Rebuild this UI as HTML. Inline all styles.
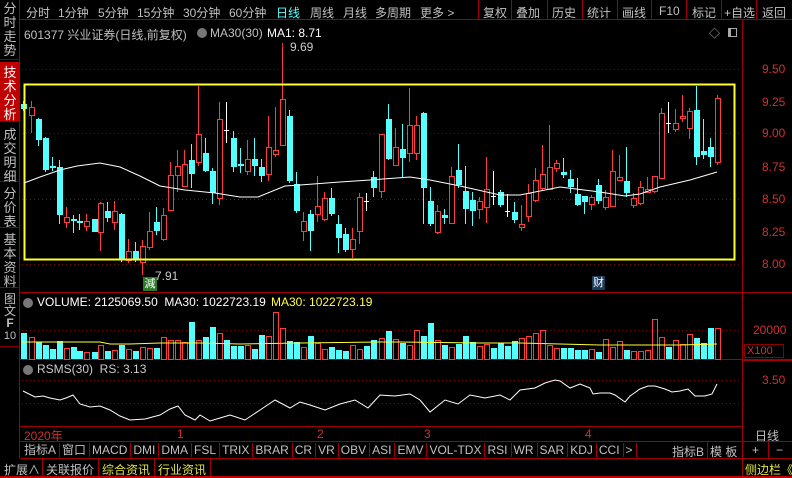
<!DOCTYPE html>
<html><head><meta charset="utf-8"><style>
*{margin:0;padding:0;box-sizing:border-box}
body{width:792px;height:478px;background:#000;overflow:hidden;position:relative;font-family:"Liberation Sans","Noto Sans CJK SC",sans-serif;font-size:12px;color:#c0c0c0}
.a{position:absolute;white-space:nowrap}
.side{position:absolute;left:0;width:20px;font-size:13px;line-height:14px;text-align:center;color:#c0c0c0;border-bottom:1px solid #800}
.sep{position:absolute;width:1px;background:#a00000}
</style></head><body>
<!-- top menu -->
<div class="a" style="left:20px;top:0;width:772px;height:20px;border-bottom:1px solid #a00000"></div>
<div class="a" style="top:4px;left:26px;font-size:12px;color:#c8c8c8">分时</div>
<div class="a" style="top:4px;left:58px">1分钟</div>
<div class="a" style="top:4px;left:98px">5分钟</div>
<div class="a" style="top:4px;left:137px">15分钟</div>
<div class="a" style="top:4px;left:183px">30分钟</div>
<div class="a" style="top:4px;left:229px">60分钟</div>
<div class="a" style="top:4px;left:276px;color:#54ffff">日线</div>
<div class="a" style="top:4px;left:310px">周线</div>
<div class="a" style="top:4px;left:343px">月线</div>
<div class="a" style="top:4px;left:375px">多周期</div>
<div class="a" style="top:4px;left:420px">更多 &gt;</div>
<div class="sep" style="left:478px;top:0;height:20px"></div>
<div class="a" style="top:4px;left:483px">复权</div>
<div class="sep" style="left:511px;top:0;height:20px"></div>
<div class="a" style="top:4px;left:516px">叠加</div>
<div class="sep" style="left:547px;top:0;height:20px"></div>
<div class="a" style="top:4px;left:552px">历史</div>
<div class="sep" style="left:582px;top:0;height:20px"></div>
<div class="a" style="top:4px;left:587px">统计</div>
<div class="sep" style="left:617px;top:0;height:20px"></div>
<div class="a" style="top:4px;left:622px">画线</div>
<div class="sep" style="left:651px;top:0;height:20px"></div>
<div class="a" style="top:4px;left:659px">F10</div>
<div class="sep" style="left:686px;top:0;height:20px"></div>
<div class="a" style="top:4px;left:692px">标记</div>
<div class="sep" style="left:721px;top:0;height:20px"></div>
<div class="a" style="top:4px;left:724px">+自选</div>
<div class="sep" style="left:756px;top:0;height:20px"></div>
<div class="a" style="top:4px;left:762px">返回</div>

<!-- sidebar -->
<div class="a" style="left:0;top:0;width:20px;height:458px;border-right:1px solid #a00000"></div>
<div class="side" style="top:2px;height:58px">分<br>时<br>走<br>势</div>
<div class="side" style="top:62px;height:60px;background:#c00000;color:#fff;padding-top:4px">技<br>术<br>分<br>析</div>
<div class="side" style="top:124px;height:58px;padding-top:4px">成<br>交<br>明<br>细</div>
<div class="side" style="top:184px;height:44px;padding-top:3px">分<br>价<br>表</div>
<div class="side" style="top:230px;height:58px;padding-top:3px">基<br>本<br>资<br>料</div>
<div class="side" style="top:292px;height:55px;padding-top:1px;font-size:12px;line-height:12px">图<br>文<br><b>F</b><br><span style="font-size:11px">10</span></div>

<!-- info line -->
<div class="a" style="top:26px;left:24px">601377 兴业证券(日线,前复权)</div>
<div class="a" style="top:28px;left:197px;width:10px;height:10px;border-radius:5px;background:#777"></div>
<div class="a" style="top:26px;left:210px">MA30(30)</div>
<div class="a" style="top:26px;left:267px;color:#fff">MA1: 8.71</div>
<div class="a" style="top:40px;left:290px;color:#ccc">9.69</div>
<div class="a" style="top:269px;left:155px;color:#ccc">7.91</div>
<div class="a" style="top:277px;left:143px;width:14px;height:14px;background:#2a7a2a;color:#fff;font-size:11px;line-height:14px;text-align:center">減</div>
<div class="a" style="top:276px;left:592px;width:13px;height:14px;background:#1c3a5a;color:#fff;font-size:11px;line-height:14px;text-align:center">财</div>
<div class="a" style="top:25px;left:709px;color:#aaa;font-size:11px">◇</div>
<div class="a" style="top:28px;left:728px;width:9px;height:9px;border:1px solid #aaa;border-left-width:3px"></div>

<!-- volume info -->
<div class="a" style="top:298px;left:23px;width:10px;height:10px;border-radius:5px;background:#777"></div>
<div class="a" style="top:295px;left:37px;color:#fff">VOLUME: 2125069.50 &nbsp;MA30: 1022723.19</div>
<div class="a" style="top:295px;left:271px;color:#ffff40">MA30: 1022723.19</div>
<div class="a" style="top:365px;left:23px;width:10px;height:10px;border-radius:5px;background:#777"></div>
<div class="a" style="top:362px;left:37px;color:#ccc">RSMS(30) &nbsp;RS: 3.13</div>

<!-- right axis labels -->
<div class="a" style="left:762px;top:62px;color:#d03030">9.50</div>
<div class="a" style="left:762px;top:95px;color:#d03030">9.25</div>
<div class="a" style="left:762px;top:126px;color:#d03030">9.00</div>
<div class="a" style="left:762px;top:160px;color:#d03030">8.75</div>
<div class="a" style="left:762px;top:192px;color:#d03030">8.50</div>
<div class="a" style="left:762px;top:225px;color:#d03030">8.25</div>
<div class="a" style="left:762px;top:257px;color:#d03030">8.00</div>
<div class="a" style="left:753px;top:323px;color:#d03030">20000</div>
<div class="a" style="left:744px;top:344px;width:40px;height:14px;border:1px solid #800;color:#d03030;font-size:11px;line-height:12px;padding-left:2px">X100</div>
<div class="a" style="left:762px;top:373px;color:#d03030">3.50</div>

<svg class="a" style="left:0;top:0" width="792" height="478" id="g">
<g stroke="#a00000" fill="none">
<line x1="742.5" y1="20" x2="742.5" y2="458"/>
<line x1="20" y1="292.5" x2="792" y2="292.5"/>
<line x1="20" y1="359.5" x2="792" y2="359.5"/>
<line x1="742" y1="360.5" x2="792" y2="360.5"/>
<line x1="20" y1="426.5" x2="742" y2="426.5"/>
</g>
<g stroke="#701010" stroke-dasharray="1,3">
<line x1="22" y1="69.5" x2="742" y2="69.5"/>
<line x1="22" y1="133.5" x2="742" y2="133.5"/>
<line x1="22" y1="199.5" x2="742" y2="199.5"/>
<line x1="22" y1="264.5" x2="742" y2="264.5"/>
<line x1="22" y1="330.5" x2="742" y2="330.5"/>
<line x1="22" y1="380.5" x2="742" y2="380.5"/>
<line x1="22" y1="403.5" x2="742" y2="403.5"/>
</g>
<g id="c"></g>
<rect x="24.5" y="84.5" width="710" height="175" fill="none" stroke="#ffff30" stroke-width="2"/>
<polyline fill="none" stroke="#fff" stroke-width="1" points="24,183 40,177 60,170 77,166 100,163 120,167 140,176 160,186 185,190 215,193 240,197 258,197 285,186 300,185 340,182 370,180 410,177 430,180 460,186 500,195 520,195 560,187 600,192 625,196 640,194 660,187 690,180 717,172"/>
<polyline fill="none" stroke="#ffff30" points="22,342 100,342 110,344 130,344 160,343 200,343 240,344 300,343 380,342 400,342 480,343 520,343 560,344 600,345 640,345 680,345 717,344"/>
<polyline fill="none" stroke="#fff" points="23,391 35,397 43,396 50,398 60,400 66,398 73,395 80,404 90,407 100,406 110,410 120,416 130,420 145,419 160,415 170,409 178,406 185,415 195,420 200,415 210,421 220,418 230,415 245,420 260,410 275,400 290,408 300,402 310,405 325,410 340,404 355,400 368,408 380,395 395,396 410,394 420,400 430,412 445,400 458,404 470,395 485,398 500,395 510,400 520,390 535,388 545,383 555,380 560,381 570,388 580,384 590,388 593,394 600,393 610,393 615,395 625,402 630,396 640,389 648,386 655,386 665,389 672,392 680,391 688,389 695,396 705,396 712,394 717,384"/>
<line x1="282.5" y1="43" x2="282.5" y2="48" stroke="#e03030"/>
</svg>

<!-- date row -->
<div class="a" style="top:427px;left:24px;color:#d03030">2020年</div>
<div class="a" style="top:427px;left:177px;color:#d03030">1</div>
<div class="a" style="top:427px;left:317px;color:#d03030">2</div>
<div class="a" style="top:427px;left:424px;color:#d03030">3</div>
<div class="a" style="top:427px;left:585px;color:#d03030">4</div>
<div class="a" style="top:427px;left:755px">日线</div>
<!-- indicator row -->
<div class="a" style="left:20px;top:441px;width:772px;height:18px;border-top:1px solid #a00000;border-bottom:1px solid #a00000"></div>
<div class="a" id="ind" style="top:443px;left:22px"></div>
<div class="a" style="top:443px;left:672px">指标B</div>
<div class="a" style="top:443px;left:710px">模 板</div>
<div class="sep" style="left:707px;top:441px;height:18px"></div>
<div class="sep" style="left:742px;top:441px;height:18px"></div>
<div class="a" style="top:443px;left:752px">+</div>
<div class="sep" style="left:768px;top:441px;height:18px"></div>
<div class="a" style="top:443px;left:776px">−</div>
<!-- bottom -->
<div class="a" style="top:461px;left:4px">扩展∧</div>
<div class="sep" style="left:42px;top:459px;height:18px"></div>
<div class="a" style="top:461px;left:46px">关联报价</div>
<div class="sep" style="left:98px;top:459px;height:18px"></div>
<div class="a" style="top:461px;left:102px;color:#e0e040">综合资讯</div>
<div class="sep" style="left:154px;top:459px;height:18px"></div>
<div class="a" style="top:461px;left:158px;color:#e0e040">行业资讯</div>
<div class="sep" style="left:210px;top:459px;height:18px"></div>
<div class="sep" style="left:742px;top:459px;height:18px"></div>
<div class="a" style="top:461px;left:745px;color:#e0e040">侧边栏《</div>
<div class="a" style="left:0;top:476px;width:792px;height:2px;background:#c00000"></div>

<script>
var C=[
['c',23,104,109,101,111],['r',31,107,115,101,133],['c',38,119,140,118,146],['c',45,138,170,137,172],['c',52,166,168,157,171],['c',59,167,215,160,224],['r',66,217,222,207,228],['c',73,219,221,215,233],['c',79,221,223,214,230],['r',86,221,226,214,231],['c',94,219,232,219,232],['r',100,203,232,202,251],['c',107,211,218,202,222],['r',114,211,222,201,230],['c',121,214,260,213,262],['r',128,251,260,239,263],['c',135,251,260,242,262],['r',142,246,262,240,275],['r',149,231,247,212,250],['c',156,222,231,207,235],['r',163,215,239,208,241],['r',170,175,210,162,210],['r',177,166,175,150,192],['r',184,164,186,150,187],['c',191,160,174,144,188],['r',198,134,162,86,166],['c',205,153,171,138,172],['c',212,171,193,168,204],['r',219,119,198,102,205],['w',226,130,130,102,143],['c',233,138,167,131,172],['c',240,164,166,148,173],['r',247,159,171,140,175],['c',254,159,166,138,176],['c',261,167,176,159,182],['r',268,147,174,116,181],['r',275,150,154,107,157],['r',282,99,145,43,145],['c',289,116,181,110,183],['c',296,184,211,172,213],['r',303,221,231,212,241],['c',310,214,231,210,251],['r',317,206,214,176,222],['r',324,198,219,192,221],['c',331,198,214,188,216],['c',338,224,238,215,253],['c',345,234,250,228,252],['r',352,239,249,228,258],['r',359,197,231,193,244],['w',366,201,201,193,211],['c',373,177,188,171,197],['r',381,134,191,134,198],['c',388,119,159,104,160],['r',395,147,165,128,166],['c',402,149,158,124,178],['r',409,125,153,88,162],['r',416,125,153,116,160],['c',423,113,188,112,224],['c',430,201,224,187,226],['r',437,211,232,205,234],['c',444,215,218,209,224],['r',451,176,223,167,224],['c',458,170,185,144,188],['c',465,191,209,166,224],['c',472,200,211,192,226],['r',479,201,209,197,219],['r',486,189,207,157,223],['w',493,196,196,171,205],['c',500,192,205,190,207],['w',507,211,211,194,217],['c',514,212,220,202,223],['r',521,224,227,205,231],['r',528,193,216,184,222],['r',535,180,200,168,202],['r',542,174,188,145,191],['r',549,167,189,125,190],['r',556,163,168,160,172],['c',563,172,175,158,178],['c',570,179,187,170,193],['c',577,194,205,178,206],['c',584,196,202,197,214],['r',591,197,204,195,210],['c',598,185,201,179,204],['r',605,197,207,190,210],['r',612,171,206,150,206],['r',619,177,180,155,181],['c',626,181,193,147,197],['r',633,198,205,193,208],['r',640,187,203,181,205],['r',647,189,192,177,193],['r',654,176,191,176,193],['r',661,113,178,108,178],['w',668,123,123,102,133],['r',675,123,129,109,132],['r',682,116,118,95,122],['r',689,111,128,108,139],['c',696,110,157,86,165],['c',703,151,155,119,159],['c',710,147,157,138,167],['r',717,98,162,95,165]];
var V=[333,337,342,345,349,341,348,347,351,352,352,345,351,350,345,349,351,347,348,348,337,340,340,342,322,340,337,327,333,340,346,346,345,349,335,336,312,328,341,342,347,336,343,349,347,350,351,345,349,346,340,338,331,339,343,345,330,336,323,340,345,347,344,336,342,346,344,348,343,346,341,338,336,333,330,345,348,348,348,350,350,349,352,339,347,341,350,351,351,350,319,337,347,340,344,334,338,343,328,328];
var R='#ff3c3c',Y='#54ffff',s='';
C.forEach(function(k,i){var t=k[0],x=k[1],c=t=='r'?R:(t=='c'?Y:'#fff');
s+='<line x1="'+(x+.5)+'" y1="'+k[4]+'" x2="'+(x+.5)+'" y2="'+k[5]+'" stroke="'+c+'"/>';
if(t=='w')s+='<line x1="'+(x-2)+'" y1="'+(k[2]+.5)+'" x2="'+(x+3)+'" y2="'+(k[2]+.5)+'" stroke="#fff"/>';
else if(t=='r')s+='<rect x="'+(x-2+.5)+'" y="'+(k[2]+.5)+'" width="5" height="'+Math.max(1,k[3]-k[2])+'" fill="#000" stroke="'+R+'"/>';
else s+='<rect x="'+(x-2)+'" y="'+k[2]+'" width="6" height="'+Math.max(2,k[3]-k[2])+'" fill="'+Y+'"/>';
var v=V[i]||345;
if(t=='r')s+='<rect x="'+(x-2+.5)+'" y="'+(v+.5)+'" width="5" height="'+(359-v)+'" fill="#000" stroke="'+R+'"/>';
else s+='<rect x="'+(x-2)+'" y="'+v+'" width="6" height="'+(359-v)+'" fill="'+Y+'"/>';});
document.getElementById('c').innerHTML=s;
var I=['指标A','窗口','MACD','DMI','DMA','FSL','TRIX','BRAR','CR','VR','OBV','ASI','EMV','VOL-TDX','RSI','WR','SAR','KDJ','CCI','>'];
var h='';I.forEach(function(n){h+='<span style="display:inline-block;padding:0 3px 0 2px;border-right:1px solid #a00000;line-height:14px">'+n+'</span>';});
document.getElementById('ind').innerHTML=h;
</script>
</body></html>
